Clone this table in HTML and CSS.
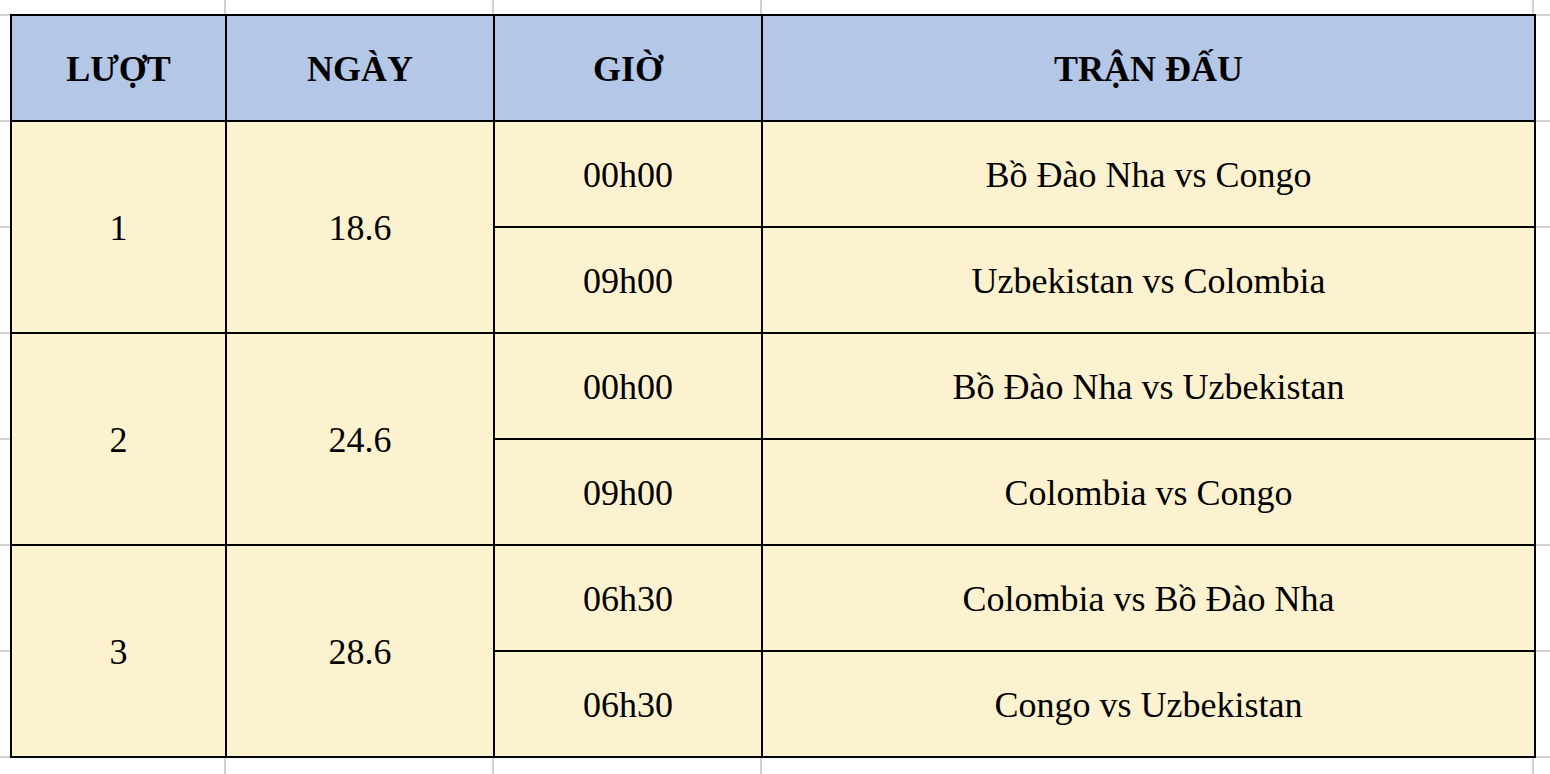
FILE: index.html
```html
<!DOCTYPE html>
<html lang="vi">
<head>
<meta charset="utf-8">
<title>Lịch thi đấu</title>
<link rel="stylesheet" href="styles.css">
</head>
<body>
<div class="sheet">
  <table class="schedule">
    <colgroup>
      <col class="c-round">
      <col class="c-date">
      <col class="c-time">
      <col class="c-match">
    </colgroup>
    <thead>
      <tr>
        <th>LƯỢT</th>
        <th>NGÀY</th>
        <th>GIỜ</th>
        <th>TRẬN ĐẤU</th>
      </tr>
    </thead>
    <tbody>
      <tr>
        <td rowspan="2">1</td>
        <td rowspan="2">18.6</td>
        <td>00h00</td>
        <td>Bồ Đào Nha vs Congo</td>
      </tr>
      <tr>
        <td>09h00</td>
        <td>Uzbekistan vs Colombia</td>
      </tr>
      <tr>
        <td rowspan="2">2</td>
        <td rowspan="2">24.6</td>
        <td>00h00</td>
        <td>Bồ Đào Nha vs Uzbekistan</td>
      </tr>
      <tr>
        <td>09h00</td>
        <td>Colombia vs Congo</td>
      </tr>
      <tr>
        <td rowspan="2">3</td>
        <td rowspan="2">28.6</td>
        <td>06h30</td>
        <td>Colombia vs Bồ Đào Nha</td>
      </tr>
      <tr>
        <td>06h30</td>
        <td>Congo vs Uzbekistan</td>
      </tr>
    </tbody>
  </table>
</div>
</body>
</html>
```

FILE: styles.css
```css
html, body {
  margin: 0;
  padding: 0;
}

body {
  width: 1550px;
  height: 774px;
  overflow: hidden;
  background-color: #ffffff;
  /* spreadsheet gridlines behind the table */
  background-image:
    linear-gradient(#d2d2d2, #d2d2d2),
    linear-gradient(#d2d2d2, #d2d2d2),
    linear-gradient(#d2d2d2, #d2d2d2),
    linear-gradient(#d2d2d2, #d2d2d2),
    repeating-linear-gradient(to bottom, #d2d2d2 0 2px, transparent 2px 106px);
  background-size: 2px 100%, 2px 100%, 2px 100%, 2px 100%, 100% 100%;
  background-position: 224px 0, 492px 0, 760px 0, 1532px 0, 0 14px;
  background-repeat: no-repeat, no-repeat, no-repeat, no-repeat, no-repeat;
  font-family: "Liberation Serif", "Times New Roman", serif;
  color: #000;
}

.sheet {
  padding: 14px 0 0 10px;
}

.schedule {
  border-collapse: collapse;
  table-layout: fixed;
  width: 1524px;
  border: 2px solid #000;
}

.c-round { width: 215px; }
.c-date  { width: 268px; }
.c-time  { width: 268px; }
.c-match { width: 773px; }

.schedule th,
.schedule td {
  border: 2px solid #000;
  height: 102px;
  padding: 2px 0 0;
  text-align: center;
  vertical-align: middle;
  font-size: 36px;
  line-height: 40px;
  white-space: nowrap;
}

.schedule th {
  background: #b4c7e7;
  font-weight: bold;
}

.schedule td {
  background: #fdf2cf;
  font-weight: normal;
}
```
